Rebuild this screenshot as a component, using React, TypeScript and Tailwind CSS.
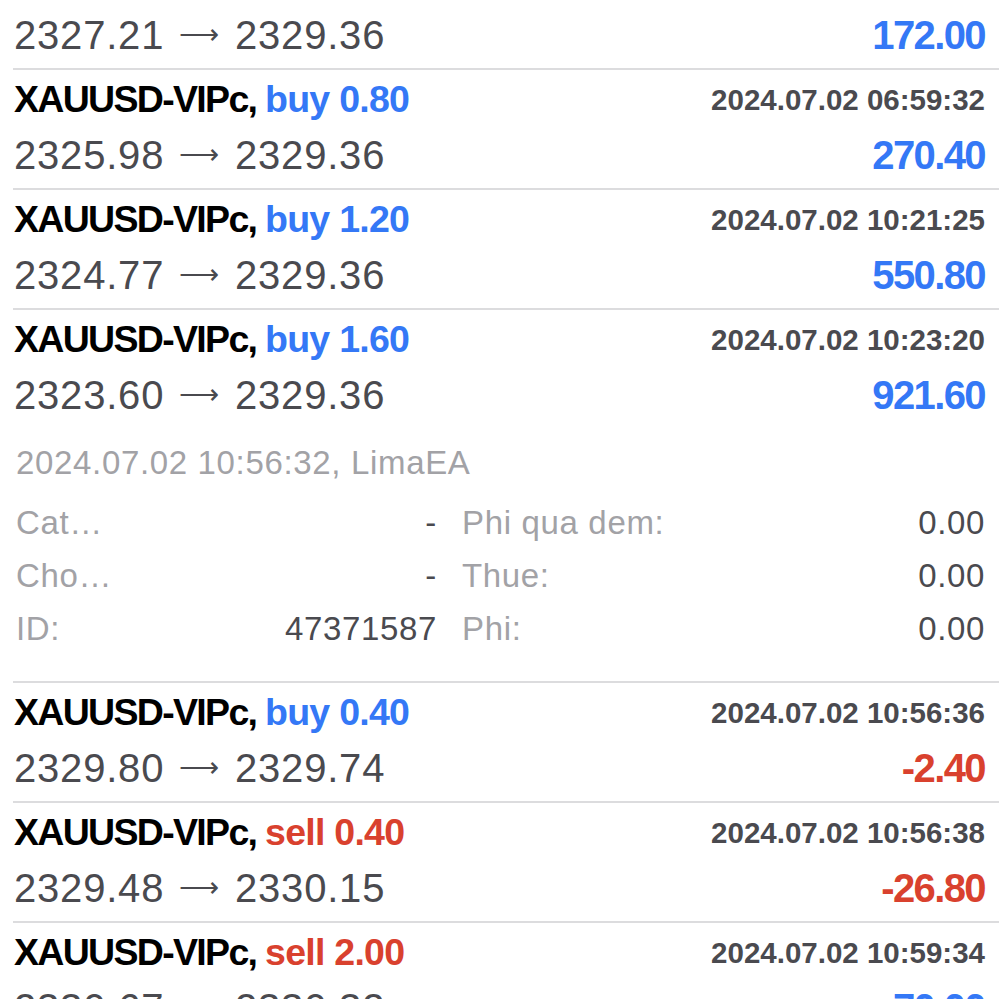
import React from 'react';

type Trade = {
  side: 'buy' | 'sell';
  lot: string;
  time: string;
  open: string;
  close: string;
  profit: string;
};

const before: Trade[] = [
  { side: 'buy', lot: '0.80', time: '2024.07.02 06:41:18', open: '2327.21', close: '2329.36', profit: '172.00' },
  { side: 'buy', lot: '0.80', time: '2024.07.02 06:59:32', open: '2325.98', close: '2329.36', profit: '270.40' },
  { side: 'buy', lot: '1.20', time: '2024.07.02 10:21:25', open: '2324.77', close: '2329.36', profit: '550.80' },
  { side: 'buy', lot: '1.60', time: '2024.07.02 10:23:20', open: '2323.60', close: '2329.36', profit: '921.60' },
];

const after: Trade[] = [
  { side: 'buy', lot: '0.40', time: '2024.07.02 10:56:36', open: '2329.80', close: '2329.74', profit: '-2.40' },
  { side: 'sell', lot: '0.40', time: '2024.07.02 10:56:38', open: '2329.48', close: '2330.15', profit: '-26.80' },
  { side: 'sell', lot: '2.00', time: '2024.07.02 10:59:34', open: '2330.67', close: '2330.32', profit: '70.00' },
];

const font = { fontFamily: '"Liberation Sans", Arial, sans-serif' };
const arrowFont = { fontFamily: '"DejaVu Sans", "Liberation Sans", sans-serif' };

const TradeRow = ({ t }: { t: Trade }) => {
  const sideColor = t.side === 'buy' ? 'text-[#3478f6]' : 'text-[#d9412e]';
  const profitColor = t.profit.startsWith('-') ? 'text-[#d9412e]' : 'text-[#3478f6]';
  return (
    <div className="h-[118px] flex flex-col px-[14px]" style={font}>
      <div className="h-[60px] flex items-center justify-between">
        <div className="text-[37.5px] font-bold leading-none whitespace-nowrap tracking-[-0.045em]">
          <span className="text-black">XAUUSD-VIPc,</span>{' '}
          <span className={`${sideColor} tracking-[-0.02em]`}>
            {t.side} {t.lot}
          </span>
        </div>
        <div className="text-[29.5px] font-bold leading-none text-[#4a4a4f]">{t.time}</div>
      </div>
      <div className="h-[50px] flex items-center justify-between">
        <div className="text-[40px] leading-none text-[#4a4a4f] tracking-[0.02em] whitespace-nowrap flex items-center">
          <span>{t.open}</span>
          <span className="mx-[15px] text-[28px] font-light" style={arrowFont}>
            ⟶
          </span>
          <span>{t.close}</span>
        </div>
        <div className={`text-[40px] font-bold leading-none tracking-[-0.04em] ${profitColor}`}>{t.profit}</div>
      </div>
    </div>
  );
};

const Sep = () => <div className="ml-[13px] h-[2px] bg-[#dcdcde]" />;

const DetailLine = ({ label, value }: { label: string; value: string }) => (
  <div className="flex items-center justify-between h-[53px]">
    <span className="text-[#a2a2a6]">{label}</span>
    <span className="text-[#4a4a4f]">{value}</span>
  </div>
);

export default function App() {
  return (
    <div className="w-[999px] h-[999px] overflow-hidden bg-white">
      <div className="mt-[-50px]">
        {before.map((t, i) => (
          <React.Fragment key={i}>
            {i > 0 && <Sep />}
            <TradeRow t={t} />
          </React.Fragment>
        ))}
        <div className="pl-[16px] pr-[14px] pb-[26px] text-[33px] tracking-[0.02em] leading-none" style={font}>
          <div className="h-[68px] flex items-center text-[#a2a2a6]">2024.07.02 10:56:32, LimaEA</div>
          <div className="grid grid-cols-[421px_1fr] gap-x-[25px]">
            <div className="flex flex-col">
              <DetailLine label="Cat…" value="-" />
              <DetailLine label="Cho…" value="-" />
              <DetailLine label="ID:" value="47371587" />
            </div>
            <div className="flex flex-col">
              <DetailLine label="Phi qua dem:" value="0.00" />
              <DetailLine label="Thue:" value="0.00" />
              <DetailLine label="Phi:" value="0.00" />
            </div>
          </div>
        </div>
        {after.map((t, i) => (
          <React.Fragment key={i}>
            <Sep />
            <TradeRow t={t} />
          </React.Fragment>
        ))}
      </div>
    </div>
  );
}
